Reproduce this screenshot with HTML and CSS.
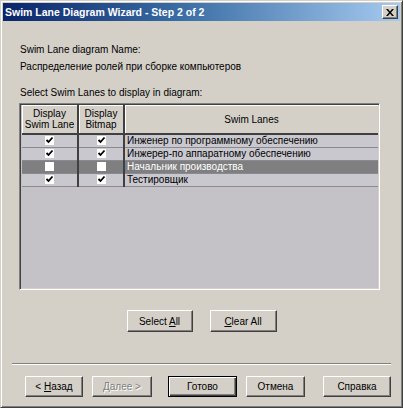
FILE: index.html
```html
<!DOCTYPE html>
<html lang="ru">
<head>
    <meta charset="UTF-8">
    <title>Swim Lane Diagram Wizard - Step 2 of 2</title>
    <link rel="stylesheet" href="styles.css">
</head>
<body>
    <div class="window">
        <div class="titlebar">
            <span class="title">Swim Lane Diagram Wizard - Step 2 of 2</span>
            <span class="close-btn">
                <svg width="8" height="7" viewBox="0 0 8 7">
                    <path d="M0 0h2l2 2.5 2-2.5h2L5 3.5 8 7H6L4 4.5 2 7H0l3-3.5z" fill="#000"/>
                </svg>
            </span>
        </div>

        <main class="content">
            <p class="label name-label">Swim Lane diagram Name:</p>
            <p class="label">Распределение ролей при сборке компьютеров</p>
            <p class="label select-label">Select Swim Lanes to display in diagram:</p>

            <div class="grid">
                <table class="lanes">
                    <tr class="head">
                        <th class="col-show">Display<br>Swim Lane</th>
                        <th class="col-bitmap">Display<br>Bitmap</th>
                        <th>Swim Lanes</th>
                    </tr>
                    <tr>
                        <td><span class="check on"></span></td>
                        <td><span class="check on"></span></td>
                        <td class="name">Инженер по программному обеспечению</td>
                    </tr>
                    <tr>
                        <td><span class="check on"></span></td>
                        <td><span class="check on"></span></td>
                        <td class="name">Инжерер-по аппаратному обеспечению</td>
                    </tr>
                    <tr class="selected">
                        <td><span class="check"></span></td>
                        <td><span class="check"></span></td>
                        <td class="name">Начальник производства</td>
                    </tr>
                    <tr>
                        <td><span class="check on"></span></td>
                        <td><span class="check on"></span></td>
                        <td class="name">Тестировщик</td>
                    </tr>
                </table>
            </div>

            <div class="grid-buttons">
                <button class="btn btn-select">Select <u>A</u>ll</button>
                <button class="btn btn-clear"><u>C</u>lear All</button>
            </div>
        </main>

        <div class="separator"></div>

        <div class="footer">
            <button class="btn btn-back">&lt; <u>Н</u>азад</button>
            <button class="btn btn-next" disabled>Далее &gt;</button>
            <button class="btn btn-finish">Готово</button>
            <button class="btn btn-cancel">Отмена</button>
            <button class="btn btn-help">Справка</button>
        </div>
    </div>
</body>
</html>
```

FILE: styles.css
```css
body {
    margin: 0;
    background-color: #d4d0c8;
    font-family: "Liberation Sans", Arial, sans-serif;
    font-size: 10px;
    color: #000;
}

.window {
    width: 403px;
    height: 408px;
    box-sizing: border-box;
    border: 1px solid;
    border-color: #d4d0c8 #404040 #404040 #d4d0c8;
    box-shadow: inset 1px 1px #fff, inset -1px -1px #808080;
    padding: 2px;
    background-color: #d4d0c8;
}

.titlebar {
    display: flex;
    align-items: center;
    justify-content: space-between;
    height: 18px;
    padding: 0 2px 0 2px;
    background: linear-gradient(to right, #0a246a, #3a6ea5 45%, #a6caf0);
}

.title {
    color: #fff;
    font-weight: bold;
    font-size: 10.5px;
}

.close-btn {
    display: flex;
    align-items: center;
    justify-content: center;
    width: 14px;
    height: 12px;
    background-color: #d4d0c8;
    border: 1px solid;
    border-color: #fff #404040 #404040 #fff;
    box-shadow: inset -1px -1px #808080;
}

.content {
    padding: 0 20px 0 16px;
}

.label {
    margin: 5px 0 0 1px;
    line-height: 12px;
}

.name-label {
    margin-top: 23px;
}

.select-label {
    margin-top: 14px;
}

.grid {
    margin-top: 4px;
    height: 187px;
    box-sizing: border-box;
    border: 1px solid;
    border-color: #808080 #fff #fff #808080;
    box-shadow: inset 1px 1px #404040, inset -1px -1px #d4d0c8;
    padding: 1px 1px 2px 2px;
    background-color: #c4c2c7;
}

.lanes {
    width: 100%;
    border-collapse: collapse;
}

.lanes th {
    height: 28px;
    padding: 0;
    font-weight: normal;
    line-height: 11px;
    text-align: center;
    background-color: #d4d0c8;
    border-right: 2px solid #404040;
    border-bottom: 2px solid #404040;
    box-shadow: inset 1px 1px #fff;
}

.lanes th:last-child {
    border-right: 0;
}

.col-show {
    width: 55px;
}

.col-bitmap {
    width: 44px;
}

.lanes td {
    height: 12px;
    padding: 0;
    line-height: 12px;
    text-align: center;
    background-color: #c9c8ce;
    border-right: 2px solid #404040;
    border-bottom: 1px solid #8a8a8e;
}

.lanes td:last-child {
    border-right: 0;
}

.lanes td.name {
    text-align: left;
    padding-left: 2px;
}

.lanes tr.selected td {
    background-color: #7f7f81;
    color: #fff;
}

.check {
    display: inline-block;
    width: 9px;
    height: 9px;
    vertical-align: -1px;
    background-color: #fff;
}

.check.on {
    background: #fff url("data:image/svg+xml,%3Csvg xmlns='http://www.w3.org/2000/svg' width='9' height='9'%3E%3Cpath d='M1.5 4l2 2 4-4.5' fill='none' stroke='%23000' stroke-width='1.8'/%3E%3C/svg%3E") no-repeat center;
}

.grid-buttons {
    display: flex;
    justify-content: center;
    gap: 17px;
    margin-top: 20px;
    padding-left: 4px;
}

.btn {
    height: 22px;
    padding: 0;
    font-family: "Liberation Sans", Arial, sans-serif;
    font-size: 10px;
    color: #000;
    background-color: #d4d0c8;
    border: 1px solid;
    border-color: #fff #404040 #404040 #fff;
    box-shadow: inset -1px -1px #808080;
}

.btn-select {
    width: 66px;
}

.btn-clear {
    width: 67px;
}

.separator {
    margin: 31px 9px 0 9px;
    height: 1px;
    border-top: 1px solid #808080;
    border-bottom: 1px solid #fff;
    height: 0;
}

.footer {
    display: flex;
    margin-top: 11px;
    padding-left: 22px;
}

.footer .btn {
    height: 21px;
}

.btn-back {
    width: 58px;
}

.btn-next {
    width: 60px;
    margin-left: 9px;
    color: #808080;
    text-shadow: 1px 1px #fff;
}

.btn-finish {
    width: 69px;
    margin-left: 16px;
    border: 1px solid #000;
    box-shadow: inset 1px 1px #fff, inset -1px -1px #404040, inset -2px -2px #808080;
}

.btn-cancel {
    width: 59px;
    margin-left: 9px;
}

.btn-help {
    width: 68px;
    margin-left: 18px;
}
```
